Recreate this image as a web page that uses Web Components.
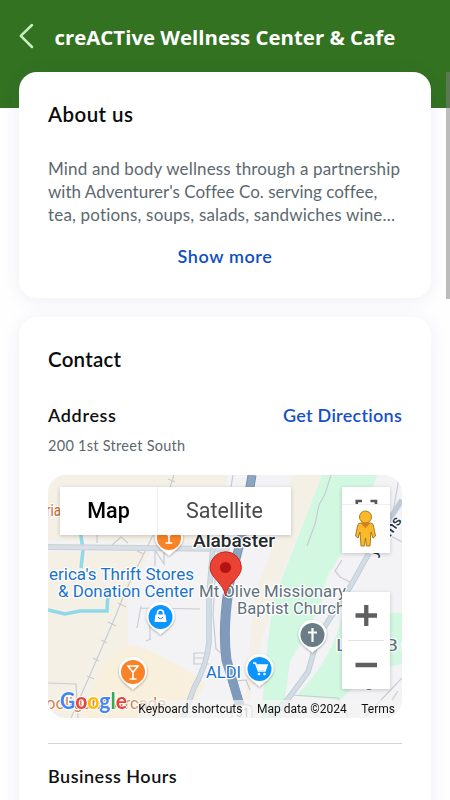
<!DOCTYPE html>
<html lang="en">
<head>
<meta charset="utf-8">
<meta name="viewport" content="width=device-width, initial-scale=1">
<title>creACTive Wellness Center &amp; Cafe</title>
<style>
    body {
        margin: 0;
        height: 800px;
        overflow: hidden;
        background: #fefeff;
        font-family: Lato, "Open Sans", sans-serif;
    }
</style>
</head>
<body>
<business-page>
    <page-header slot="header">creACTive Wellness Center &amp; Cafe</page-header>

    <info-card heading="About us">
        <about-text>
            Mind and body wellness through a partnership
            <span slot="second">with Adventurer's Coffee Co. serving coffee,</span>
            <span slot="third">tea, potions, soups, salads, sandwiches wine...</span>
        </about-text>
    </info-card>

    <info-card heading="Contact" class="contact">
        <address-row label="Address" action="Get Directions">200 1st Street South</address-row>
        <location-map></location-map>
        <section-title>Business Hours</section-title>
    </info-card>
</business-page>

<script>
class BusinessPage extends HTMLElement {
    connectedCallback() {
        const shadow = this.attachShadow({ mode: "open" });

        shadow.innerHTML = `
        <style>
            :host {
                display: block;
                position: relative;
                height: 800px;
                overflow: hidden;
            }

            main {
                display: flex;
                flex-direction: column;
                gap: 19px;
                margin-top: -36px;
                padding: 0 19px;
            }

            .scrollbar {
                position: absolute;
                top: 72px;
                right: 0;
                width: 4px;
                height: 227px;
                background: rgba(128, 128, 128, 0.53);
            }
        </style>

        <slot name="header"></slot>
        <main><slot></slot></main>
        <div class="scrollbar"></div>`;
    }
}

customElements.define("business-page", BusinessPage);

class PageHeader extends HTMLElement {
    connectedCallback() {
        const shadow = this.attachShadow({ mode: "open" });

        shadow.innerHTML = `
        <style>
            :host {
                display: flex;
                box-sizing: border-box;
                height: 108px;
                padding: 23px 0 0 19px;
                gap: 20.5px;
                background: #327221;
                color: #fff;
                font: 700 20.4px/28px "Open Sans", sans-serif;
                white-space: nowrap;
            }

            svg {
                flex: none;
                width: 15px;
                height: 26px;
            }
        </style>

        <svg viewBox="0 0 15 26"><path d="M13 2 1.8 12.800 13 24" fill="none" stroke="#c9efc0" stroke-width="2.500" stroke-linecap="round" stroke-linejoin="round"/></svg>
        <span><slot></slot></span>`;
    }
}

customElements.define("page-header", PageHeader);

class InfoCard extends HTMLElement {
    connectedCallback() {
        const shadow = this.attachShadow({ mode: "open" });

        shadow.innerHTML = `
        <style>
            :host {
                display: block;
                box-sizing: border-box;
                height: 226px;
                padding: 28px 29px 0;
                border-radius: 18px;
                background: #fff;
                box-shadow: 0 2px 18px rgba(60, 60, 110, 0.08);
            }

            :host(.contact) {
                height: 520px;
            }

            h2 {
                margin: 0;
                color: #0b0b0b;
                font-size: 20.5px;
                font-weight: 600;
                line-height: 28px;
                letter-spacing: 0.45px;
            }

            :host(.contact) h2 {
                letter-spacing: 0.25px;
            }
        </style>

        <h2>${this.getAttribute("heading")}</h2>
        <slot></slot>`;
    }
}

customElements.define("info-card", InfoCard);

class AboutText extends HTMLElement {
    connectedCallback() {
        const shadow = this.attachShadow({ mode: "open" });

        shadow.innerHTML = `
        <style>
            :host {
                display: block;
                padding-top: 30px;
                white-space: nowrap;
            }

            p {
                margin: 0;
                color: #5c686f;
                font-size: 17px;
                line-height: 22.8px;
            }

            .first { letter-spacing: 0.16px; }
            .second { letter-spacing: 0.01px; }
            .third { letter-spacing: 0.18px; }

            button {
                display: block;
                margin: 17px auto 0;
                padding: 0;
                border: 0;
                background: none;
                color: #0f4fc0;
                font: 600 18px/26px Lato, sans-serif;
                letter-spacing: 0.6px;
            }
        </style>

        <p class="first"><slot></slot></p>
        <p class="second"><slot name="second"></slot></p>
        <p class="third"><slot name="third"></slot></p>
        <button>Show more</button>`;
    }
}

customElements.define("about-text", AboutText);

class AddressRow extends HTMLElement {
    connectedCallback() {
        const shadow = this.attachShadow({ mode: "open" });

        shadow.innerHTML = `
        <style>
            :host {
                display: block;
                padding-top: 29px;
            }

            .top {
                display: flex;
                justify-content: space-between;
                font-size: 18px;
                font-weight: 600;
                line-height: 26px;
                letter-spacing: 0.65px;
                color: #111;
            }

            a {
                color: #1650c8;
                letter-spacing: 0.26px;
            }

            p {
                margin: 8px 0 0;
                color: #5b676e;
                font-size: 14.5px;
                line-height: 20px;
                letter-spacing: 0.28px;
            }
        </style>

        <div class="top"><span>${this.getAttribute("label")}</span><a>${this.getAttribute("action")}</a></div>
        <p><slot></slot></p>`;
    }
}

customElements.define("address-row", AddressRow);

class SectionTitle extends HTMLElement {
    connectedCallback() {
        const shadow = this.attachShadow({ mode: "open" });

        shadow.innerHTML = `
        <style>
            :host {
                display: block;
                margin-top: 25px;
                padding-top: 19px;
                border-top: 1px solid #d4d4d6;
                color: #111;
                font-size: 18px;
                font-weight: 600;
                line-height: 26px;
                letter-spacing: 0.5px;
            }
        </style>

        <slot></slot>`;
    }
}

customElements.define("section-title", SectionTitle);

class LocationMap extends HTMLElement {
    connectedCallback() {
        const shadow = this.attachShadow({ mode: "open" });

        shadow.innerHTML = `
        <style>
            :host {
                display: block;
                position: relative;
                height: 243px;
                margin-top: 19px;
                border-radius: 18px;
                overflow: hidden;
                font-family: Roboto, sans-serif;
            }

            svg { display: block; }

            .canvas {
                width: 354px;
                height: 243px;
            }

            .label {
                font-size: 16.5px;
                paint-order: stroke;
                stroke: #fff;
                stroke-width: 2.4px;
                stroke-linejoin: round;
            }

            .types {
                position: absolute;
                top: 12px;
                left: 12px;
                display: grid;
                grid-template-columns: 98px 133px;
                height: 48px;
                background: #fff;
                box-shadow: 0 1px 4px rgba(0, 0, 0, 0.2);
                font-size: 21.5px;
                line-height: 48px;
                text-align: center;
                color: #4a4a4a;
            }

            .types b {
                border-right: 1px solid #eee;
                color: #000;
                font-weight: 500;
            }

            .street, .zoom {
                position: absolute;
                left: 294px;
                width: 48px;
                background: #fff;
                box-shadow: 0 1px 4px rgba(0, 0, 0, 0.2);
            }

            .street {
                top: 12px;
                height: 66px;
            }

            .zoom {
                top: 117px;
                height: 97px;
            }

            .legal {
                position: absolute;
                right: 0;
                bottom: 0;
                display: flex;
                gap: 14.5px;
                padding: 0 7px 0 4px;
                background: linear-gradient(90deg, rgba(245, 245, 245, 0), rgba(245, 245, 245, 0.7) 10px);
                color: #111;
                font-size: 12px;
                line-height: 18px;
                white-space: nowrap;
            }
        </style>

        <!-- coordinates of the drawing start at (48, 475) -->
        <svg class="canvas" viewBox="48 475 354 243">
            <defs>
                <path id="pin" d="M0 18C-2 14-14 10-14-1A14 14 0 1 1 14-1C14 10 2 14 0 18Z" fill="#fff"/>
                <filter id="shade" x="-30%" y="-30%" width="160%" height="160%"><feDropShadow dx="0" dy="1" stdDeviation="0.8" flood-opacity="0.35"/></filter>
            </defs>
            <rect x="48" y="475" width="354" height="243" fill="#f3f2f5"/>
            <g fill="#f5f0e6">
                <path d="M48 475H227L218 544 150 543 48 540Z"/>
                <path d="M48 552H150L138 575 128 590V644L149 650 206 685 180 718H48Z"/>
                <path d="M292 475H322L280 580 262 640 245 718H243L250 640 256 590 268 560Z"/>
            </g>
            <path d="M128 645Q155 648 204 682L185 718H82L103 665Z" fill="#f8efdc"/>
            <g fill="#d3f8e2">
                <path d="M322 475H377L369 498 350 540 327 577 321 605 290 662 282 718H261L268 640 273 602 289 560Z"/>
                <path d="M343 613H402V664L370 672 340 700 296 696Q333 659 343 613Z"/>
            </g>

            <g fill="none" stroke="#8fd9e8" stroke-width="3.5">
                <path d="M65 500 77 516 81 536 83 550 81 568"/>
                <path d="M48 610 65 614 80 611 107 611 108 592"/>
            </g>
            <g fill="none" stroke="#c9ccd3" stroke-width="1.2">
                <path d="M174 475 156 529 126 590 116 615 90 675 71 718"/>
                <path d="M168 479 175 482M137 551 144 554M118 603 126 607M108 622 116 626M101 640 107 643M93 658 99 661M87 676 94 679"/>
                <path d="M48 683 76 684 78 718M141 606 137 628M141 608 200 609M150 608V640M146 641 151 639M97 535V543M112 545 121 537 128 543M155 566V550L164 564V552"/>
                <path d="M194 653V664H209M194 658H204M194 653H207M218 545 215 580 213 615 216 649 221 653M233 475 231 487M236 681 246 680 250 690"/>
                <path d="M331 475 325 494 319 505 315 524 307 546M342 560 335 571 340 577 352 583M399 478 389 535 402 542M392 700 398 691M292 695 338 698 348 718M365 717 402 678M340 711 350 715"/>
            </g>
            <path d="M48 547 230 549" fill="none" stroke="#ccd4db" stroke-width="6"/>
            <path d="M48 547 230 549" fill="none" stroke="#d8dfe5" stroke-width="3.5"/>
            <g fill="none" stroke="#bfcbd5" stroke-width="5.5">
                <path d="M213 545 209 595V642Q207 665 194 688L183 718"/>
                <path d="M378 537 350 587 318 637 308 672 288 699 270 718"/>
                <path d="M402 500 378 537"/>
            </g>
            <g fill="none" stroke="#d1dce4" stroke-width="3.8">
                <path d="M213 545 209 595V642Q207 665 194 688L183 718"/>
                <path d="M378 537 350 587 318 637 308 672 288 699 270 718"/>
            </g>
            <path d="M252 475 242 535 228 590Q222 630 226 660L244 718" fill="none" stroke="#7690ae" stroke-width="9"/>
            <path d="M252 475 242 535 228 590Q222 630 226 660L244 718" fill="none" stroke="#8da6c2" stroke-width="7"/>
            <path d="M229 590Q223 630 227 660L243 718" fill="none" stroke="#7f9aba" stroke-width="9"/>

            <rect x="232" y="705" width="20" height="16" rx="4" fill="#fff" stroke="#aaa"/>
            <text x="236" y="717" font-size="12" fill="#777">31</text>

            <g class="label" fill="#c5692c">
                <text x="46" y="516" textLength="15" lengthAdjust="spacingAndGlyphs">ria</text>
                <text x="46" y="709" textLength="120" lengthAdjust="spacingAndGlyphs" opacity="0.8">ooligans Arcade</text>
            </g>
            <g class="label" fill="#1a73ca">
                <text x="49" y="580" textLength="145" lengthAdjust="spacingAndGlyphs">erica's Thrift Stores</text>
                <text x="58" y="597" textLength="136" lengthAdjust="spacingAndGlyphs">&amp; Donation Center</text>
                <text x="206" y="677.500" textLength="35" lengthAdjust="spacingAndGlyphs">ALDI</text>
            </g>
            <g class="label" fill="#61717c">
                <text x="199" y="597" textLength="147" lengthAdjust="spacingAndGlyphs">Mt Olive Missionary</text>
                <text x="237" y="614" textLength="108" lengthAdjust="spacingAndGlyphs">Baptist Church</text>
                <text x="336" y="651" textLength="62" lengthAdjust="spacingAndGlyphs">Lake B</text>
                <text x="401" y="651">a</text>
                <circle cx="369" cy="684" r="6" fill="#61717c"/>
            </g>
            <g class="label" fill="#24292d" font-weight="500">
                <text x="193" y="547" textLength="82" lengthAdjust="spacingAndGlyphs" style="font-size:18px">Alabaster</text>
                <text transform="translate(376 557) rotate(-54)" fill="#26364a" style="font-size:15px">y Sims</text>
            </g>

            <g filter="url(#shade)">
                <g transform="translate(169 538)"><use href="#pin"/><circle r="12" fill="#f98325"/></g>
                <g transform="translate(133 672)"><use href="#pin"/><circle r="12" fill="#f98325"/></g>
                <g transform="translate(160.500 617)"><use href="#pin"/><circle r="12" fill="#0a95ff"/></g>
                <g transform="translate(259.500 669)"><use href="#pin"/><circle r="12" fill="#0a95ff"/></g>
                <g transform="translate(312.500 635)"><use href="#pin"/><circle r="12" fill="#6b7b85"/></g>
            </g>
            <g fill="none" stroke="#fff" stroke-width="1.6">
                <path d="M128 666H138L133 672.500ZM133 672V679M129.500 679H136.500"/>
                <path d="M164 530H174L169 536.500ZM169 536V543M165.500 543H172.500"/>
                <path d="M157.500 615V613A3 3 0 0 1 163.500 613V615"/>
                <path d="M253 663H255.500L258.500 671H265L267 665H257"/>
                <path d="M312.500 628V642M308 632.500H317" stroke-width="2.2"/>
            </g>
            <path d="M155.500 614.500H165.500L166.500 622H154.500Z" fill="#fff"/>
            <path d="M158 617Q160.500 620.500 163 617" fill="none" stroke="#0a95ff"/>
            <path d="M256.500 665H267L265 670H258.500Z" fill="#fff"/>
            <circle cx="259" cy="674" r="1.300" fill="#fff"/><circle cx="264.500" cy="674" r="1.300" fill="#fff"/>

            <path d="M225.500 596C224 583 210 578 210 567.500A15.700 15.700 0 0 1 241.400 567.500C241.400 578 227 583 225.500 596Z" fill="#ea4335" stroke="#bd2b23"/>
            <circle cx="225.500" cy="567.500" r="5.600" fill="#b31412"/>

            <text x="60" y="709" textLength="67" lengthAdjust="spacingAndGlyphs" font-size="22.500" font-weight="700" stroke="#fff" stroke-width="1.800" style="font-family:Lato,sans-serif;paint-order:stroke"><tspan fill="#4285f4">G</tspan><tspan fill="#ea4335">o</tspan><tspan fill="#fbbc04">o</tspan><tspan fill="#4285f4">g</tspan><tspan fill="#34a853">l</tspan><tspan fill="#ea4335">e</tspan></text>
        </svg>

        <div class="types"><b>Map</b><span>Satellite</span></div>

        <div class="street">
            <svg width="48" height="66" viewBox="0 0 48 66">
                <path d="M14.800 17V14H20M28.500 14H34V17" fill="none" stroke="#555" stroke-width="2.600"/>
                <path d="M0 17.500H48" stroke="#eee"/>
                <g fill="#fbb829" stroke="#9a7020" stroke-width="0.900">
                    <path d="M18.500 36H28.500Q31 36 31.500 39L33.500 49 31 51 29 45 28 59H24.500L23.500 51 22.500 59H19L18 45 16 51 13.500 49 15.500 39Q16 36 18.500 36Z"/>
                    <circle cx="23.500" cy="30" r="6"/>
                </g>
                <path d="M18.500 36H28.500L23.500 41Z" fill="#d77d17"/>
            </svg>
        </div>

        <div class="zoom">
            <svg width="48" height="97" viewBox="0 0 48 97">
                <path d="M13.500 23.500H35M24.250 13V34M13.500 73H35" stroke="#5f5f5f" stroke-width="4.300"/>
                <path d="M6 48.500H42" stroke="#e2e2e2"/>
            </svg>
        </div>

        <div class="legal"><span>Keyboard shortcuts</span><span>Map data ©2024</span><span>Terms</span></div>`;
    }
}

customElements.define("location-map", LocationMap);
</script>
</body>
</html>
